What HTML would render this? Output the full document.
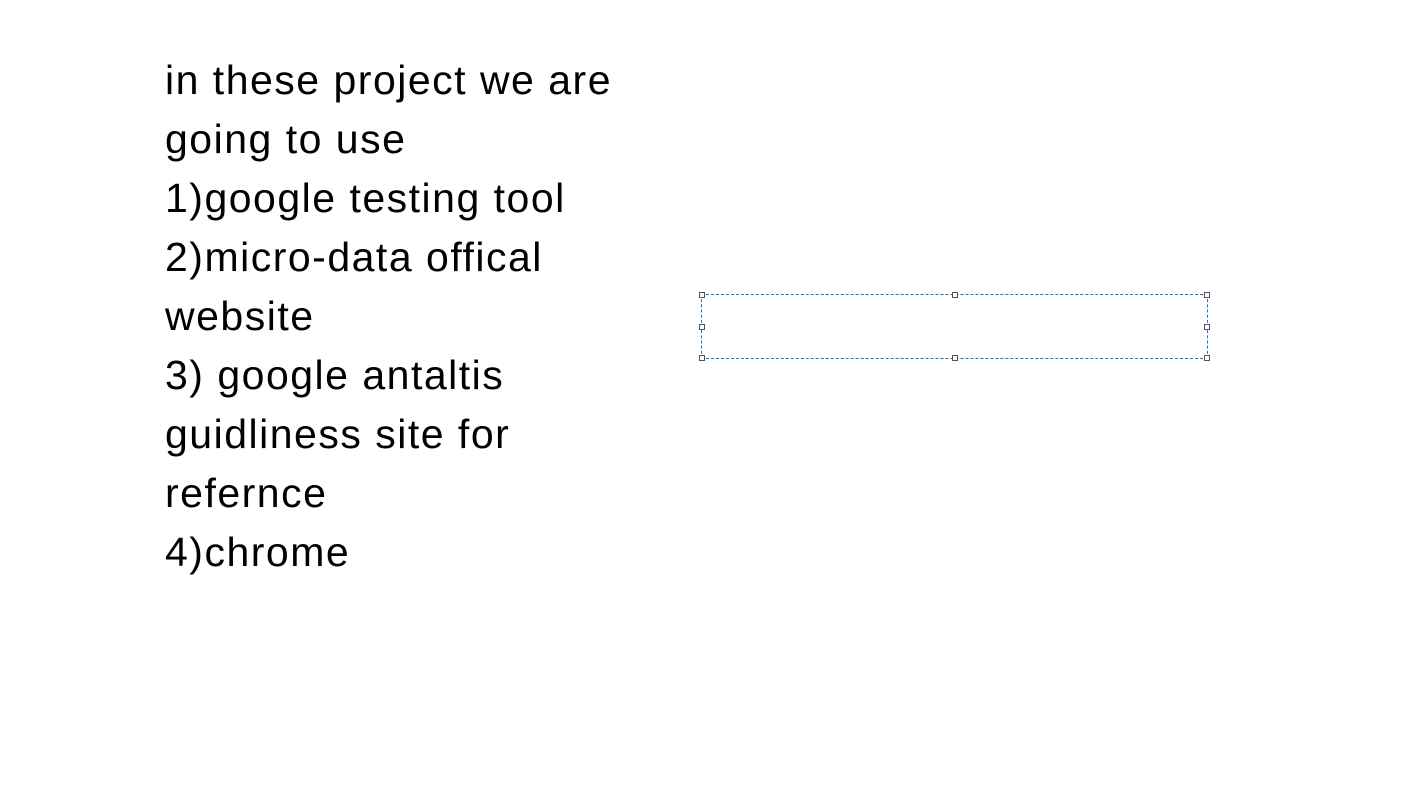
<!DOCTYPE html>
<html><head><style>
body{margin:0;width:1414px;height:801px;background:#fff;position:relative;overflow:hidden}
.t{position:absolute;left:165px;top:51px;font-family:"Liberation Sans",sans-serif;font-size:41px;line-height:59px;color:#000;letter-spacing:1.5px;white-space:pre}
.box{position:absolute;left:701px;top:294px;width:505px;height:63px;border:1px dashed #1a73c8}
.h{position:absolute;width:4px;height:4px;border:1px solid #555;background:#fff}
</style></head><body>
<div class="t">in these project we are
going to use
1)google testing tool
2)micro-data offical
website
3) google antaltis
guidliness site for
refernce
4)chrome</div>
<div class="box"></div>
<div class="h" style="left:699px;top:292px"></div>
<div class="h" style="left:952px;top:292px"></div>
<div class="h" style="left:1204px;top:292px"></div>
<div class="h" style="left:699px;top:324px"></div>
<div class="h" style="left:1204px;top:324px"></div>
<div class="h" style="left:699px;top:355px"></div>
<div class="h" style="left:952px;top:355px"></div>
<div class="h" style="left:1204px;top:355px"></div>
</body></html>
